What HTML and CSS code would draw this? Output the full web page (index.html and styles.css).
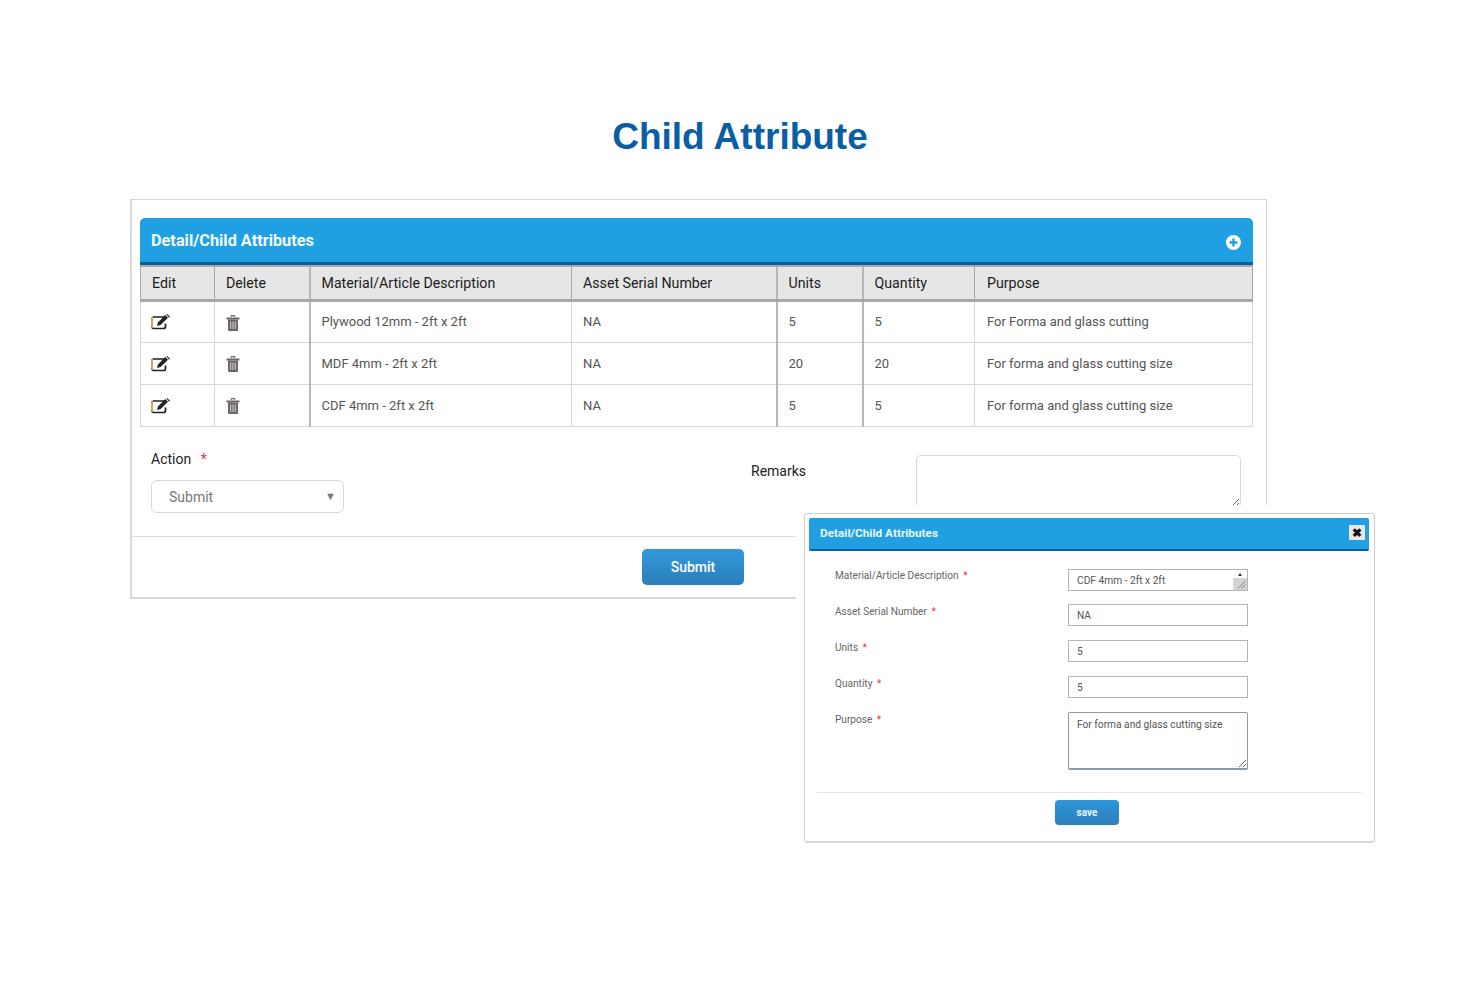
FILE: index.html
```html
<!DOCTYPE html>
<html lang="en">
<head>
    <meta charset="UTF-8">
    <title>Child Attribute</title>
    <link rel="stylesheet" href="styles.css">
</head>
<body>
    <svg class="icon-defs" width="0" height="0">
        <symbol id="icon-edit" viewBox="0 0 20 16">
            <path d="M14.500 9.500v3a2 2 0 0 1-2 2H3a2 2 0 0 1-2-2V5a2 2 0 0 1 2-2h10a2 2 0 0 1 1 .3" fill="none" stroke="#222" stroke-width="1.700"/>
            <path d="M0 5a2.500 2.500 0 0 1 2-2.400v11.800A2.500 2.500 0 0 1 0 12z" fill="#c9a86a"/>
            <path d="M6 12l.9-3.600L14.300 1l2.700 2.700-7.400 7.400z" fill="#222"/>
            <path d="M15.300.4l.9-.4 2.800 2.800-.8.900z" fill="#222"/>
        </symbol>
        <symbol id="icon-trash" viewBox="0 0 14 16">
            <path d="M5 1.800 5.600.7h2.800L9 1.800" fill="none" stroke="#6b6664" stroke-width="1.300"/>
            <path d="M.5 2.500h13v2H.5z" fill="#6b6664"/>
            <path d="M2 4.500h10V15a1 1 0 0 1-1 1H3a1 1 0 0 1-1-1z" fill="#6b6664"/>
            <path d="M4.700 6.500v7.500M7 6.500v7.500M9.300 6.500v7.500" stroke="#d8d5d3" stroke-width="1"/>
        </symbol>
        <symbol id="icon-grip" viewBox="0 0 10 10">
            <path d="M1 9.500 9.500 1M5 9.500 9.500 5" fill="none" stroke="#777" stroke-width="1"/>
        </symbol>
    </svg>

    <h1 class="page-title">Child Attribute</h1>

    <div class="card">
        <div class="panel-head">
            <span>Detail/Child Attributes</span>
            <svg class="plus-icon" width="15" height="15" viewBox="0 0 15 15">
                <circle cx="7.500" cy="7.500" r="7.500" fill="#fff"/>
                <path d="M3.500 7.500h8M7.500 3.500v8" stroke="#1f9fe0" stroke-width="2.400"/>
            </svg>
        </div>

        <table class="attr-table">
            <colgroup>
                <col class="col-edit">
                <col class="col-delete">
                <col class="col-desc">
                <col class="col-serial">
                <col class="col-units">
                <col class="col-qty">
                <col class="col-purpose">
            </colgroup>
            <thead>
                <tr>
                    <th>Edit</th>
                    <th>Delete</th>
                    <th class="thick">Material/Article Description</th>
                    <th>Asset Serial Number</th>
                    <th class="thick">Units</th>
                    <th class="thick">Quantity</th>
                    <th class="last">Purpose</th>
                </tr>
            </thead>
            <tbody>
                <tr>
                    <td class="icon-cell"><svg class="edit-icon"><use href="#icon-edit"/></svg></td>
                    <td class="icon-cell"><svg class="trash-icon"><use href="#icon-trash"/></svg></td>
                    <td class="thick">Plywood 12mm - 2ft x 2ft</td>
                    <td>NA</td>
                    <td class="thick">5</td>
                    <td class="thick">5</td>
                    <td class="last">For Forma and glass cutting</td>
                </tr>
                <tr>
                    <td class="icon-cell"><svg class="edit-icon"><use href="#icon-edit"/></svg></td>
                    <td class="icon-cell"><svg class="trash-icon"><use href="#icon-trash"/></svg></td>
                    <td class="thick">MDF 4mm - 2ft x 2ft</td>
                    <td>NA</td>
                    <td class="thick">20</td>
                    <td class="thick">20</td>
                    <td class="last">For forma and glass cutting size</td>
                </tr>
                <tr>
                    <td class="icon-cell"><svg class="edit-icon"><use href="#icon-edit"/></svg></td>
                    <td class="icon-cell"><svg class="trash-icon"><use href="#icon-trash"/></svg></td>
                    <td class="thick">CDF 4mm - 2ft x 2ft</td>
                    <td>NA</td>
                    <td class="thick">5</td>
                    <td class="thick">5</td>
                    <td class="last">For forma and glass cutting size</td>
                </tr>
            </tbody>
        </table>

        <div class="form-row">
            <div class="action-field">
                <div class="action-label">Action <span class="req">*</span></div>
                <div class="fake-select">
                    <span>Submit</span>
                    <span class="arrow">▼</span>
                </div>
            </div>
            <div class="remarks-label">Remarks</div>
            <textarea class="remarks-box"></textarea>
        </div>

        <div class="card-foot">
            <button class="btn-submit" type="button">Submit</button>
        </div>
    </div>

    <div class="dialog-wrap">
        <div class="dialog">
            <div class="dialog-head">
                <span>Detail/Child Attributes</span>
                <span class="close-btn">✖</span>
            </div>
            <div class="dialog-form">
                <div class="dialog-label">Material/Article Description <span class="req">*</span></div>
                <div class="dialog-input desc-input">
                    <span>CDF 4mm - 2ft x 2ft</span>
                    <span class="scroller">
                        <span class="scroll-up"></span>
                        <svg class="scroll-grip"><use href="#icon-grip"/></svg>
                    </span>
                </div>
                <div class="dialog-label">Asset Serial Number <span class="req">*</span></div>
                <input class="dialog-input" type="text" value="NA">
                <div class="dialog-label">Units <span class="req">*</span></div>
                <input class="dialog-input" type="text" value="5">
                <div class="dialog-label">Quantity <span class="req">*</span></div>
                <input class="dialog-input" type="text" value="5">
                <div class="dialog-label">Purpose <span class="req">*</span></div>
                <textarea class="dialog-input purpose-input">For forma and glass cutting size</textarea>
            </div>
            <div class="dialog-foot">
                <button class="btn-save" type="button">save</button>
            </div>
        </div>
    </div>
</body>
</html>
```

FILE: styles.css
```css
* {
    box-sizing: border-box;
}

html, body {
    margin: 0;
    padding: 0;
}

body {
    position: relative;
    height: 987px;
    overflow: hidden;
    background-color: #ffffff;
    font-family: Roboto, "Liberation Sans", sans-serif;
    color: #222;
}

.icon-defs {
    position: absolute;
}

.page-title {
    margin: 0;
    padding-top: 115px;
    height: 199px;
    text-align: center;
    font-family: "Liberation Sans", Arial, sans-serif;
    font-size: 37px;
    line-height: 43px;
    font-weight: 700;
    color: #0a5ea6;
}

.card {
    width: 1137px;
    height: 400px;
    margin-left: 130px;
    padding-top: 18px;
    border: 1px solid #d8d8d8;
    border-left-width: 2px;
    border-bottom-width: 2px;
}

.panel-head {
    display: flex;
    justify-content: space-between;
    align-items: center;
    width: 1113px;
    height: 47px;
    margin-left: 8px;
    padding: 1px 12px 0 11px;
    background-color: #20a0e2;
    border-bottom: 3px solid #00639f;
    border-radius: 5px 5px 0 0;
    color: #f2fbff;
    font-size: 16.300px;
    font-weight: 700;
}

.plus-icon {
    margin-top: 3px;
}

.attr-table {
    width: 1112px;
    margin-left: 8px;
    border-collapse: collapse;
    table-layout: fixed;
    font-size: 13px;
}

.col-edit { width: 74px; }
.col-delete { width: 95px; }
.col-desc { width: 262px; }
.col-serial { width: 205px; }
.col-units { width: 86px; }
.col-qty { width: 112px; }
.col-purpose { width: 278px; }

.attr-table th {
    height: 34px;
    padding: 1px 11px 0;
    background-color: #e6e6e6;
    border: 1px solid #a8a8a8;
    border-top: 2px solid #a8a8a8;
    border-bottom: 3px solid #a8a8a8;
    text-align: left;
    font-size: 14.200px;
    font-weight: 400;
    color: #1c1c1c;
}

.attr-table td {
    height: 42px;
    padding: 0 11px;
    border: 1px solid #d6d6d6;
    color: #555;
}

.attr-table th.thick, .attr-table td.thick {
    border-left: 2px solid #b8b8b8;
}

.attr-table th.last, .attr-table td.last {
    padding-left: 12px;
}

.attr-table td.icon-cell {
    line-height: 0;
}

.edit-icon {
    width: 20px;
    height: 16px;
    margin: 1px 0 0 -1px;
}

.trash-icon {
    width: 14px;
    height: 16px;
    margin-top: 2px;
}

.form-row {
    display: grid;
    grid-template-columns: 600px 165px 325px;
    align-items: start;
    height: 109px;
    padding: 24px 0 0 19px;
}

.action-label {
    margin-bottom: 12px;
    font-size: 14px;
    line-height: 17px;
    color: #222;
}

.req {
    margin-left: 6px;
    color: #e53935;
}

.fake-select {
    display: flex;
    justify-content: space-between;
    align-items: center;
    width: 193px;
    height: 33px;
    padding: 1px 7px 0 17px;
    border: 1px solid #d9d9d9;
    border-radius: 6px;
    font-size: 14px;
    color: #777;
}

.arrow {
    font-size: 11px;
    color: #777;
}

.remarks-label {
    padding-top: 12px;
    font-size: 14px;
    line-height: 17px;
    color: #222;
}

.remarks-box {
    display: block;
    width: 325px;
    height: 53px;
    margin: 4px 0 0;
    border: 1px solid #d9d9d9;
    border-radius: 5px;
}

.card-foot {
    height: 62px;
    padding: 12px 0 0 510px;
    border-top: 1px solid #dedede;
}

.btn-submit {
    width: 102px;
    height: 36px;
    border: none;
    border-radius: 5px;
    background: linear-gradient(#3398dc, #2a7fba);
    color: #fff;
    font-family: inherit;
    font-size: 14px;
    font-weight: 500;
}

/* white patch hides the card edge behind the dialog */
.dialog-wrap {
    position: absolute;
    left: 796px;
    top: 505px;
    padding: 8px 100px 100px 8px;
    background-color: #ffffff;
}

.dialog {
    width: 571px;
    height: 329px;
    padding: 4px 5px 0 4px;
    border: 1px solid #cfcfcf;
    border-radius: 3px;
    box-shadow: 0 1px 1px #ddd;
}

.dialog-head {
    display: flex;
    justify-content: space-between;
    align-items: center;
    height: 33px;
    padding: 0 4px 2px 11px;
    background-color: #20a0e2;
    border-bottom: 2px solid #00639f;
    border-radius: 2px;
    color: #e8f6fd;
    font-size: 11.800px;
    font-weight: 700;
}

.close-btn {
    display: flex;
    justify-content: center;
    align-items: center;
    width: 16px;
    height: 15px;
    background-color: #e8e8e8;
    font-size: 12px;
    color: #111;
}

.dialog-form {
    display: grid;
    grid-template-columns: 233px 180px;
    grid-auto-rows: min-content;
    row-gap: 14px;
    height: 242px;
    margin: 0 7px 0 8px;
    padding: 17px 0 0 18px;
    border-bottom: 1px solid #e6e6e6;
    font-size: 10px;
}

.dialog-label {
    height: 22px;
    padding-top: 1px;
    color: #666;
    font-size: 10.100px;
    line-height: 13px;
}

.dialog-label .req {
    margin-left: 2px;
}

.dialog-input {
    display: block;
    width: 180px;
    height: 22px;
    margin: 0;
    padding: 0 8px;
    border: 1px solid #b5b5b5;
    background: #fff;
    font-family: inherit;
    font-size: 10.200px;
    color: #555;
}

.desc-input {
    display: flex;
    justify-content: space-between;
    align-items: center;
    margin: 1px 0 -1px;
    padding-right: 0;
}

.scroller {
    display: block;
    position: relative;
    width: 14px;
    height: 20px;
    background: linear-gradient(#fff 40%, #d4d4d4 40%);
}

.scroll-up {
    position: absolute;
    left: 5px;
    top: 3px;
    width: 0;
    height: 0;
    border: 2px solid transparent;
    border-bottom: 3px solid #333;
    border-top: 0;
}

.scroll-grip {
    position: absolute;
    right: 1px;
    bottom: 1px;
    width: 9px;
    height: 9px;
}

.purpose-input {
    height: 58px;
    padding-top: 6px;
    border: 1px solid #8d97ad;
    border-bottom-width: 2px;
    border-radius: 2px;
}

.dialog-foot {
    display: flex;
    justify-content: center;
    padding: 7px 4px 0 0;
}

.btn-save {
    width: 64px;
    height: 25px;
    border: none;
    border-radius: 4px;
    background: linear-gradient(#2f96d8, #2a7fba);
    color: #e8f6fd;
    font-family: inherit;
    font-size: 10px;
    font-weight: 700;
}
```
